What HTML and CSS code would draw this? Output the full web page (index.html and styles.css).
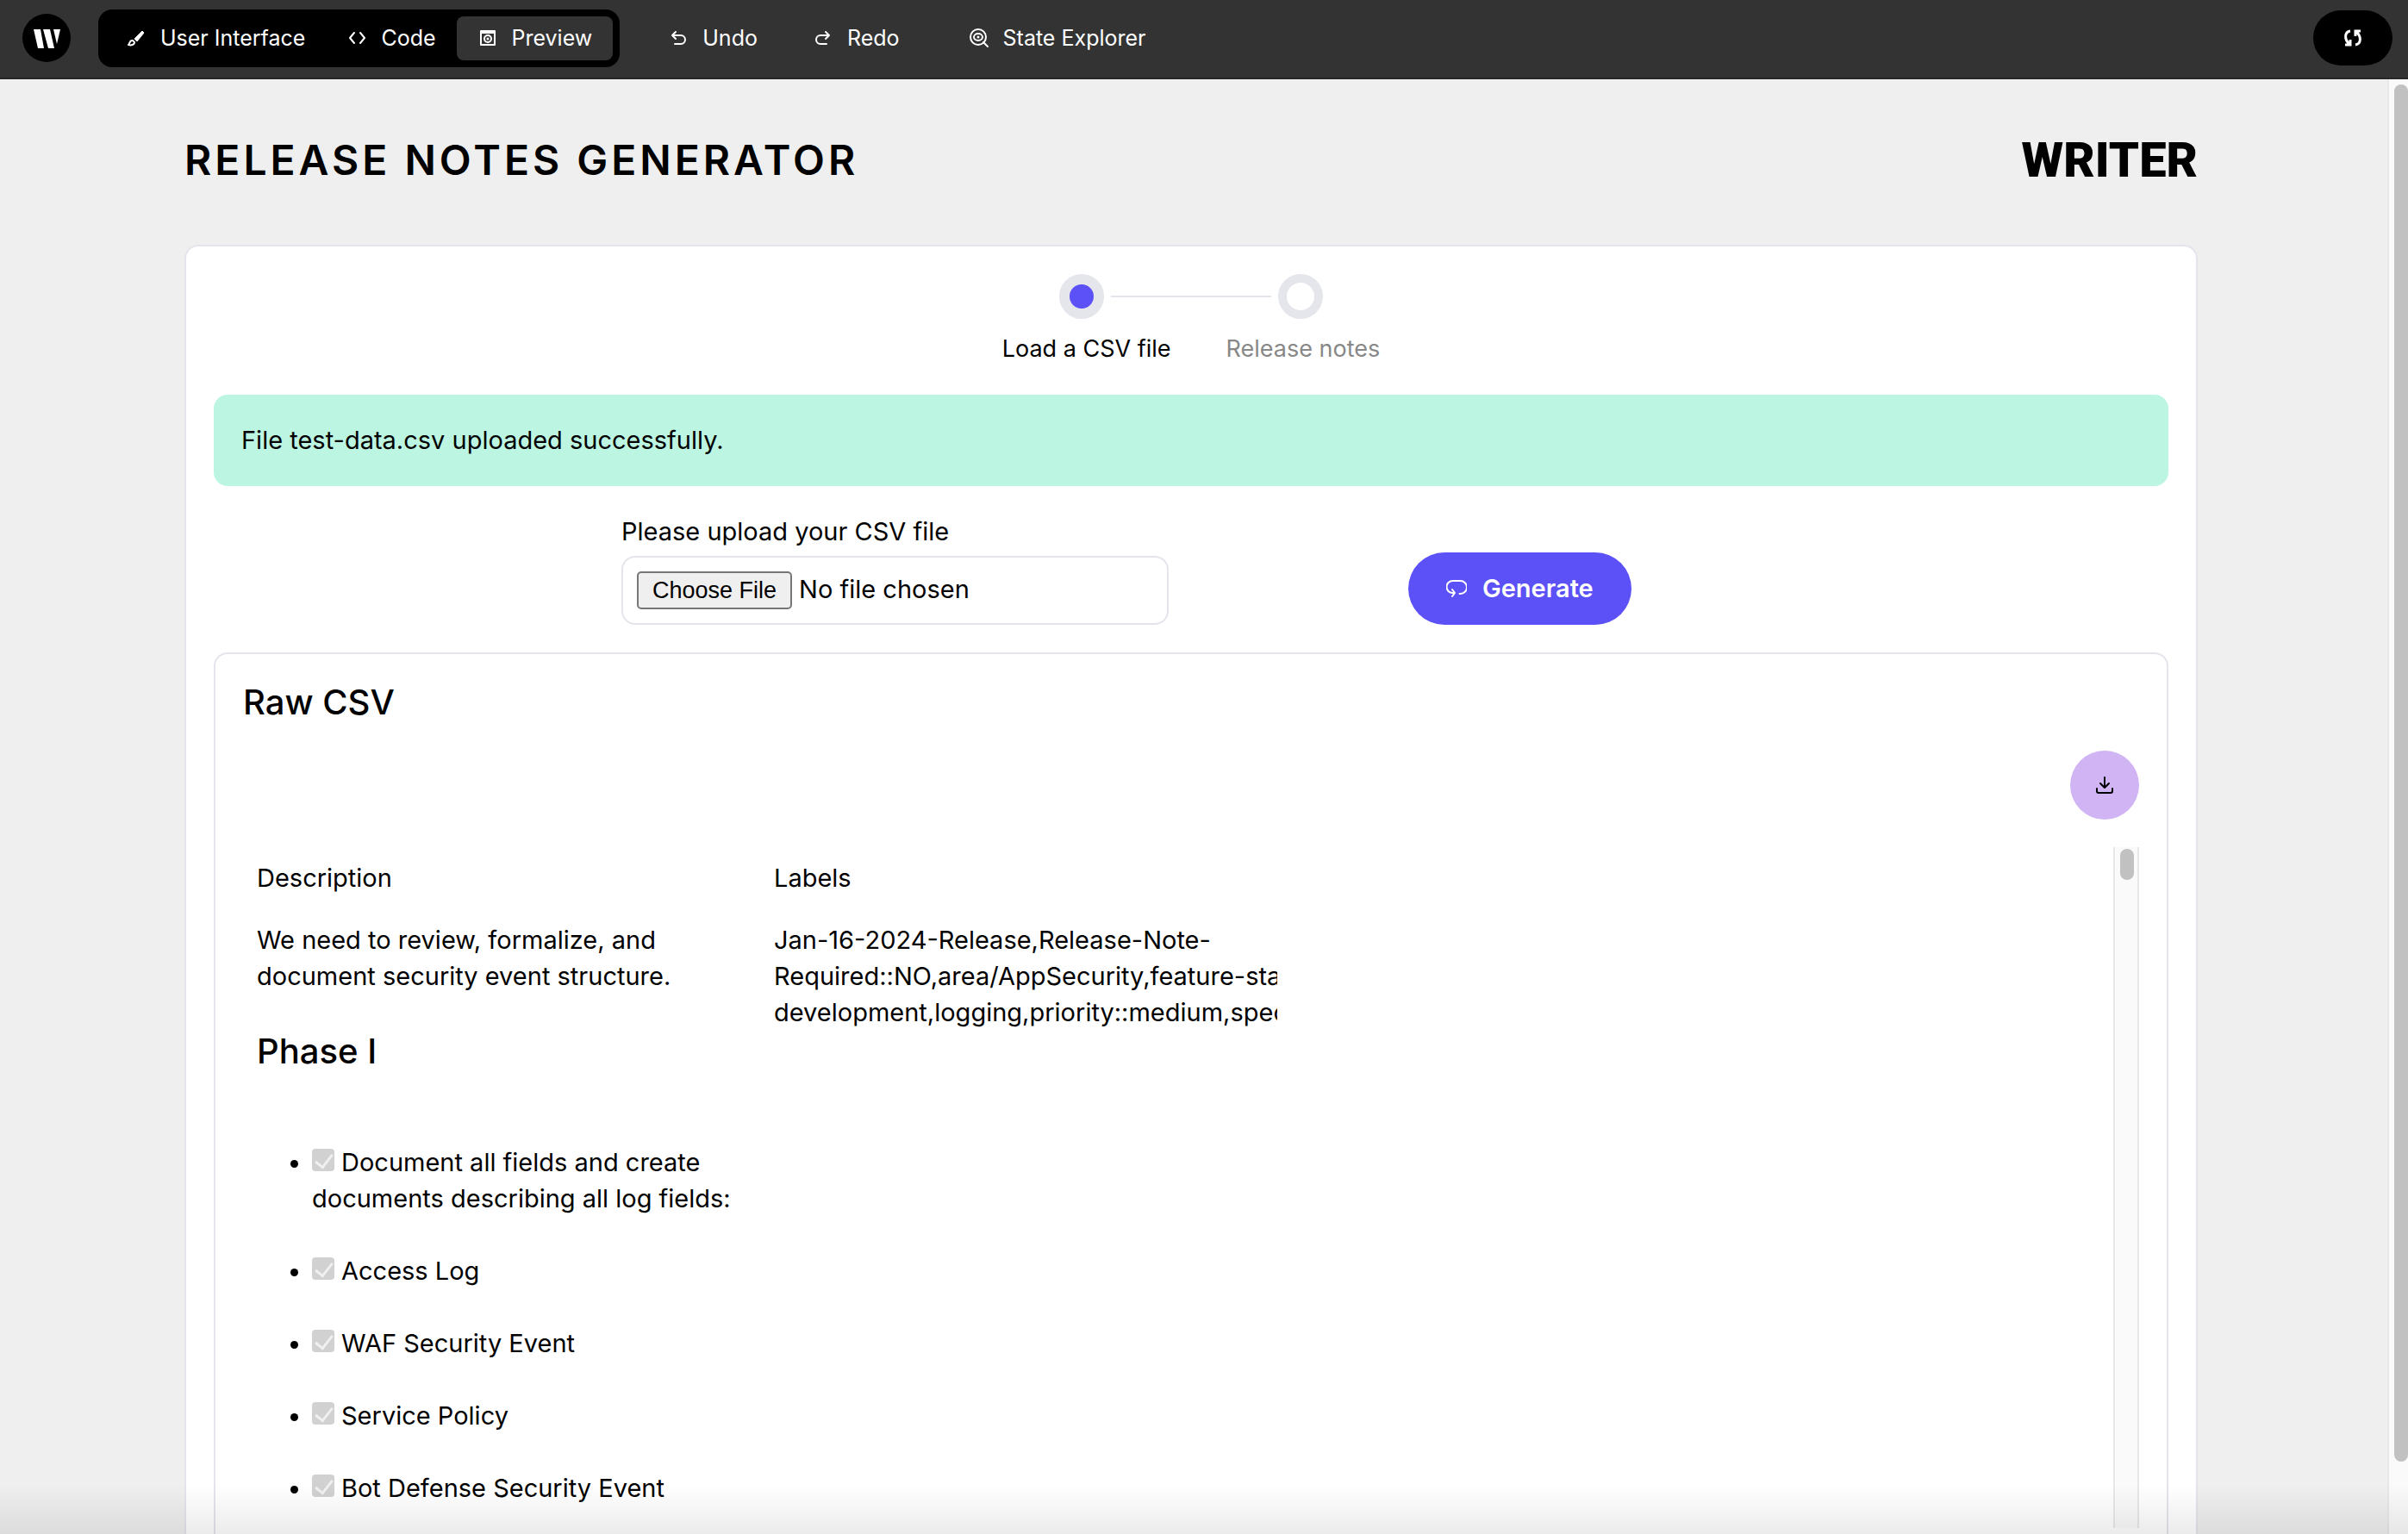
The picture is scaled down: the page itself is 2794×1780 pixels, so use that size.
FILE: index.html
```html
<!DOCTYPE html>
<html lang="en">
<head>
<meta charset="utf-8">
<title>Release Notes Generator</title>
<link rel="stylesheet" href="styles.css">
</head>
<body>
<header class="topbar">
  <svg class="brand" viewBox="0 0 56 56" role="img" aria-label="Writer">
    <circle cx="28" cy="28" r="28" fill="#000"/>
    <g fill="#fff"><path d="M13 18h8l4 22h-7z"/><path d="M24 18h8l5 22h-7z"/><path d="M36 18h8l-4 17z"/></g>
  </svg>
  <nav class="tabs">
    <button class="tool">
      <svg class="icon" viewBox="0 0 24 24"><path d="M19 4l2 2-8 10-3-3z" fill="currentColor" stroke="currentColor" stroke-linejoin="round"/><path d="M8 15c-4-1-3 4-5 5 3 1 7 0 7-3z" class="line"/></svg>
      User Interface
    </button>
    <button class="tool">
      <svg class="icon" viewBox="0 0 24 24"><path class="line" d="M9 6l-5 6 5 6M16 6l5 6-5 6"/></svg>
      Code
    </button>
    <button class="tool tool-active">
      <svg class="icon" viewBox="0 0 24 24"><path class="line" d="M4 4h16v16H4zM4 6h16"/><circle class="line" cx="12" cy="13" r="4"/><circle cx="12" cy="13" r="1.5" fill="currentColor"/></svg>
      Preview
    </button>
  </nav>
  <div class="history">
    <button class="tool">
      <svg class="icon" viewBox="0 0 24 24"><path class="line" d="M9 5L5 9l4 4M5 9h10a5 5 0 0 1 0 10H8"/></svg>
      Undo
    </button>
    <button class="tool">
      <svg class="icon" viewBox="0 0 24 24"><path class="line" d="M15 5l4 4-4 4M19 9H9a5 5 0 0 0 0 10h7"/></svg>
      Redo
    </button>
  </div>
  <button class="tool">
    <svg class="icon" viewBox="0 0 24 24"><circle class="line" cx="11" cy="11" r="9"/><path class="line" d="M17 17l5 5"/><ellipse class="line" cx="11" cy="11" rx="5" ry="4"/><circle cx="11" cy="11" r="1.5" fill="currentColor"/></svg>
    State Explorer
  </button>
  <button class="sync" aria-label="Refresh">
    <svg class="icon" viewBox="0 0 24 24"><path d="M9 4C2 5 2 14 8 19M3 20h6v-6M15 20c7-1 7-10 1-15M21 4h-6v6" fill="none" stroke="currentColor" stroke-width="3"/></svg>
  </button>
</header>
<div class="viewport">
  <main class="page">
    <div class="page-head">
      <h1 class="title">RELEASE NOTES GENERATOR</h1>
      <div class="wordmark">WRITER</div>
    </div>
    <section class="card">
      <div class="stepper">
        <div class="track" aria-hidden="true"><span class="dot dot-on"></span><span class="rail"></span><span class="dot"></span></div>
        <ol class="steps"><li class="step">Load a CSV file</li><li class="step step-next">Release notes</li></ol>
      </div>
      <p class="notice">File test-data.csv uploaded successfully.</p>
      <div class="upload">
        <div class="field">
          <label for="csv">Please upload your CSV file</label>
          <input class="file" id="csv" type="file" accept=".csv">
        </div>
        <button class="generate">
          <svg class="icon" viewBox="0 0 24 24"><path class="line" d="M9 17H7.500A6 6 0 0 1 7.500 3h9a6 6 0 0 1 0 15H15.500M7 13l3 4-3 4"/></svg>
          Generate
        </button>
      </div>
      <section class="panel">
        <h2 class="heading">Raw CSV</h2>
        <button class="download" aria-label="Download">
          <svg class="icon" viewBox="0 0 24 24"><path class="line" d="M12 3v12M7 10l5 5 5-5M3 16v3a2 2 0 0 0 2 2h14a2 2 0 0 0 2-2v-3"/></svg>
        </button>
        <div class="scroller">
          <table class="data">
            <colgroup><col class="col-desc"><col class="col-labels"><col></colgroup>
            <thead><tr><th>Description</th><th>Labels</th><th></th></tr></thead>
            <tbody><tr>
              <td>
                <p>We need to review, formalize, and<br>document security event structure.</p>
                <h2 class="heading phase">Phase I</h2>
                <ul class="tasks">
                  <li><label><input type="checkbox" checked disabled>Document all fields and create<br>documents describing all log fields:</label></li>
                  <li><label><input type="checkbox" checked disabled>Access Log</label></li>
                  <li><label><input type="checkbox" checked disabled>WAF Security Event</label></li>
                  <li><label><input type="checkbox" checked disabled>Service Policy</label></li>
                  <li><label><input type="checkbox" checked disabled>Bot Defense Security Event</label></li>
                </ul>
              </td>
              <td><div class="clip">Jan-16-2024-Release,Release-Note-<br>Required::NO,area/AppSecurity,feature-status::<br>development,logging,priority::medium,specification</div></td>
              <td></td>
            </tr></tbody>
          </table>
          <div class="bar" aria-hidden="true"><span class="thumb"></span></div>
        </div>
      </section>
    </section>
  </main>
  <div class="page-bar" aria-hidden="true"><span class="page-thumb"></span></div>
</div>
</body>
</html>
```
FILE: styles.css
```css
* { box-sizing: border-box; }
body {
  margin: 0;
  height: 100vh;
  display: flex;
  flex-direction: column;
  overflow: hidden;
  background: #efefef;
  color: #000;
  font: 29px/42px Inter, "Open Sans", sans-serif;
}
body::after {
  content: "";
  position: fixed;
  inset: auto 0 0 0;
  height: 56px;
  background: linear-gradient(rgba(0, 0, 0, 0), rgba(0, 0, 0, .08));
  pointer-events: none;
}
h1, h2, p, ol, ul { margin: 0; padding: 0; }
button { border: 0; font: inherit; color: inherit; background: none; cursor: pointer; }
.icon { width: 24px; height: 24px; flex: none; }
.line { fill: none; stroke: currentColor; stroke-width: 2; stroke-linecap: round; stroke-linejoin: round; }

.topbar {
  flex: none;
  display: flex;
  align-items: center;
  gap: 32px;
  height: 92px;
  padding: 0 18px 2px 26px;
  border-bottom: 2px solid #282828;
  background: #333;
  color: #fff;
}
.brand { width: 56px; height: 56px; }
.tabs { display: flex; padding: 8px; border-radius: 16px; background: #000; }
.history { display: flex; gap: 16px; }
.tool {
  display: flex;
  align-items: center;
  gap: 16px;
  height: 51px;
  padding: 0 24px;
  border-radius: 8px;
  font-size: 25px;
  line-height: 36px;
  white-space: nowrap;
}
.tool-active { background: #333; }
.sync {
  display: flex;
  align-items: center;
  justify-content: center;
  width: 92px;
  height: 64px;
  margin-left: auto;
  border-radius: 32px;
  background: #000;
}

.viewport { flex: 1; min-height: 0; display: flex; overflow: hidden; }
.page { flex: 1; min-width: 0; padding: 0 220px 0 214px; }
.page-head { display: flex; align-items: center; justify-content: space-between; height: 192px; padding-bottom: 4px; }
.title { font-size: 48px; line-height: 72px; font-weight: 600; letter-spacing: 4px; }
.wordmark { font: 900 56px/72px Roboto, "Liberation Sans", sans-serif; }
.card {
  display: flex;
  flex-direction: column;
  gap: 32px;
  padding: 32px;
  border: 2px solid #e4e4ec;
  border-radius: 16px;
  background: #fff;
}

.stepper { display: flex; flex-direction: column; align-items: center; gap: 14px; }
.track { display: flex; align-items: center; gap: 8px; }
.dot { width: 52px; height: 52px; border: 10px solid #e5e6ec; border-radius: 50%; background: #fff; }
.dot-on { border-width: 12px; background: #5c50f7; }
.rail { width: 186px; height: 2px; background: #e4e4ec; }
.steps { display: flex; gap: 64px; list-style: none; font-size: 27px; }
.step { text-align: center; white-space: nowrap; }
.step-next { color: #888; }
.notice { padding: 32px; border-radius: 16px; background: #bcf6e2; }

.upload { display: grid; grid-template-columns: 473fr 635fr 278fr 882fr; align-items: end; }
.field { grid-column: 2; display: flex; flex-direction: column; gap: 7px; }
.file {
  width: 100%;
  padding: 16px;
  border: 2px solid #e4e4ec;
  border-radius: 16px;
  font: inherit;
  line-height: 42px;
  color: inherit;
}
.file::file-selector-button {
  height: 44px;
  margin: 0 8px 0 0;
  padding: 0 16px;
  border: 2px solid #767676;
  border-radius: 5px;
  background: #efefef;
  font: 27px/30px "Liberation Sans", sans-serif;
}
.generate {
  grid-column: 4;
  justify-self: start;
  display: flex;
  align-items: center;
  gap: 18px;
  height: 84px;
  padding: 0 44px;
  border-radius: 42px;
  background: #5c50f7;
  color: #fff;
  font-weight: 600;
}

.panel {
  display: flex;
  flex-direction: column;
  gap: 32px;
  padding: 32px;
  border: 2px solid #e4e4ec;
  border-radius: 16px;
}
.heading { font-size: 40px; line-height: 48px; font-weight: 500; }
.download {
  align-self: flex-end;
  display: flex;
  align-items: center;
  justify-content: center;
  width: 80px;
  height: 80px;
  border-radius: 50%;
  background: #d0b4f4;
}
.scroller { display: flex; height: 790px; overflow: hidden; }
.data { flex: 1; width: 100%; min-width: 0; table-layout: fixed; border-collapse: collapse; height: fit-content; }
.col-desc { width: 600px; }
.col-labels { width: 616px; }
.data th, .data td { padding: 15px 16px; text-align: left; vertical-align: top; font-weight: 400; }
.clip { overflow: hidden; white-space: nowrap; }
.phase { margin: 42px 0 84px; }
.tasks { display: flex; flex-direction: column; gap: 42px; padding-left: 64px; }
.tasks li { white-space: nowrap; }
.tasks input {
  appearance: none;
  width: 26px;
  height: 26px;
  margin: 0 8px 0 0;
  border-radius: 4px;
  background: #d1d1d1;
  vertical-align: baseline;
  position: relative;
}
.tasks input::after {
  content: "";
  position: absolute;
  left: 8px;
  top: 2px;
  width: 9px;
  height: 17px;
  border: solid #f0f0f0;
  border-width: 0 3px 3px 0;
  transform: rotate(38deg);
}
.bar { flex: none; width: 30px; padding: 2px 6px; border: solid #e8e8e8; border-width: 0 2px; background: #fafafa; }
.thumb { display: block; width: 16px; height: 36px; border-radius: 8px; background: #c1c1c1; }
.page-bar { flex: none; width: 24px; padding: 6px 0 84px 6px; border-left: 2px solid #e8e8e8; background: #fafafa; }
.page-thumb { display: block; height: 100%; border-radius: 8px; background: #c1c1c1; }
```
